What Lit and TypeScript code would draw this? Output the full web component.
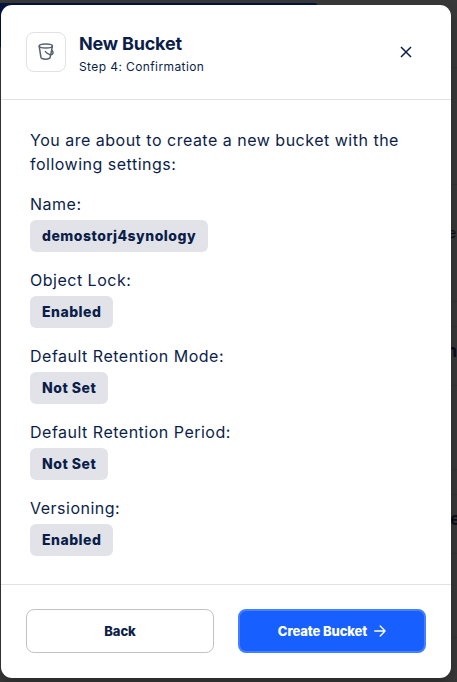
import { LitElement, html, css } from "lit";
import { customElement, property } from "lit/decorators.js";

@customElement("setting-row")
class SettingRow extends LitElement {
  @property() label = "";
  @property() value = "";

  static styles = css`
    :host { display: block; margin-top: 16px; }
    .label { font-size: 16px; line-height: 24px; letter-spacing: 0.5px; }
    .chip {
      display: flex; align-items: center; box-sizing: border-box;
      width: fit-content; height: 32px; margin-top: 4px; padding: 0 12px;
      border-radius: 6px; background: #e2e3e9;
      font-size: 14px; line-height: 20px; font-weight: 800; letter-spacing: 0.5px;
    }
  `;

  render() {
    return html`<div class="label">${this.label}:</div><div class="chip">${this.value}</div>`;
  }
}

@customElement("app-root")
class AppRoot extends LitElement {
  private settings = [
    ["Name", "demostorj4synology"],
    ["Object Lock", "Enabled"],
    ["Default Retention Mode", "Not Set"],
    ["Default Retention Period", "Not Set"],
    ["Versioning", "Enabled"],
  ];

  static styles = css`
    :host {
      display: block; position: relative; box-sizing: border-box;
      width: 457px; height: 682px; padding: 5px 6px 4px 1px; overflow: hidden;
      background: #383838; color: #0b1e49;
      font-family: Inter, "Liberation Sans", sans-serif;
    }
    .banner { position: absolute; left: 0; top: 3px; width: 318px; height: 44px; background: #00133f; border-radius: 0 4px 0 0; }
    .line { position: absolute; right: 0; width: 7px; height: 1px; background: #303132; }
    .behind { position: absolute; left: 448px; color: #090d1b; font-size: 14px; line-height: 20px; }
    .behind.strong { font-size: 18px; font-weight: 700; left: 446px; }
    .behind.strong.low { left: 450px; }
    .card {
      position: relative; display: flex; flex-direction: column; box-sizing: border-box;
      height: 673px; background: #fff; border-radius: 11px;
      box-shadow: 0 6px 12px rgba(0, 0, 0, 0.25);
    }
    header {
      display: flex; align-items: center; box-sizing: border-box;
      height: 95px; padding: 0 25px; border-bottom: 1px solid #e2e2e4;
    }
    .icon {
      display: flex; align-items: center; justify-content: center; box-sizing: border-box;
      width: 40px; height: 40px; border: 1px solid #e1e1e3; border-radius: 8px;
    }
    .titles { flex: 1; margin-left: 13px; padding-top: 5px; }
    h1 { margin: 0; font-size: 18px; line-height: 24px; font-weight: 750; letter-spacing: -0.2px; }
    .step { font-size: 12px; line-height: 21px; letter-spacing: 0.4px; }
    .close {
      display: flex; align-items: center; justify-content: center;
      width: 40px; height: 40px; padding: 0; border: 0; background: none; color: inherit;
    }
    main { flex: 1; padding: 28px 29px 0; }
    p { margin: 0; font-size: 16px; line-height: 24px; letter-spacing: 0.5px; }
    footer {
      display: grid; grid-template-columns: 1fr 1fr; gap: 24px; box-sizing: border-box;
      height: 94px; padding: 24px 25px; border-top: 1px solid #e0e1e7;
    }
    .btn {
      display: flex; align-items: center; justify-content: center; box-sizing: border-box;
      height: 44px; padding: 0; border: 1px solid #c2c2c2; border-radius: 8px;
      background: #fff; color: inherit; font: 800 13px/20px Inter, sans-serif; letter-spacing: -0.1px;
    }
    .btn.primary { background: #1760ff; border: 2px solid #4580ff; color: #fff; gap: 7px; }
    svg { display: block; fill: none; stroke: currentColor; }
    .bucket { color: #56616d; }
  `;

  render() {
    return html`
      <div class="banner"></div>
      <div class="line" style="top:67px"></div>
      <div class="line" style="top:184px"></div>
      <div class="line" style="top:301px"></div>
      <div class="line" style="top:326px"></div>
      <div class="line" style="top:385px"></div>
      <div class="line" style="top:469px"></div>
      <div class="line" style="top:494px"></div>
      <div class="line" style="top:553px"></div>
      <div class="line" style="top:637px"></div>
      <span class="behind" style="top:223px">e</span>
      <span class="behind strong" style="top:341px">n</span>
      <span class="behind strong low" style="top:509px">e</span>
      <section class="card">
        <header>
          <div class="icon">
            <svg class="bucket" width="18" height="18" viewBox="0 0 18 18" stroke-width="1.5" stroke-linecap="round" stroke-linejoin="round">
              <ellipse cx="8.8" cy="3.1" rx="6.6" ry="2"/>
              <path d="M2.2 3.4 3.9 14.2C4.2 15.6 6 16.2 8.6 16.2s4.3-.6 4.6-2L15.4 3.4"/>
              <path d="M8.4 8.6c1.2 1.5 2.8 2.6 4.8 3.1 1.5.3 2.6-.4 2.8-1.6.2-1.1-.2-2-1-2.8"/>
            </svg>
          </div>
          <div class="titles"><h1>New Bucket</h1><div class="step">Step 4: Confirmation</div></div>
          <button class="close" aria-label="Close">
            <svg width="12" height="12" viewBox="0 0 12 12" stroke-width="1.5"><path d="m1 1 10 10M11 1 1 11"/></svg>
          </button>
        </header>
        <main>
          <p>You are about to create a new bucket with the following settings:</p>
          ${this.settings.map(([label, value]) => html`<setting-row .label=${label} .value=${value}></setting-row>`)}
        </main>
        <footer>
          <button class="btn">Back</button>
          <button class="btn primary">Create Bucket
            <svg width="12" height="12" viewBox="0 0 12 12" stroke-width="1.3" stroke-linecap="round" stroke-linejoin="round"><path d="M.7 6h10.4M6.2 1l4.9 5-4.9 5"/></svg>
          </button>
        </footer>
      </section>
    `;
  }
}
